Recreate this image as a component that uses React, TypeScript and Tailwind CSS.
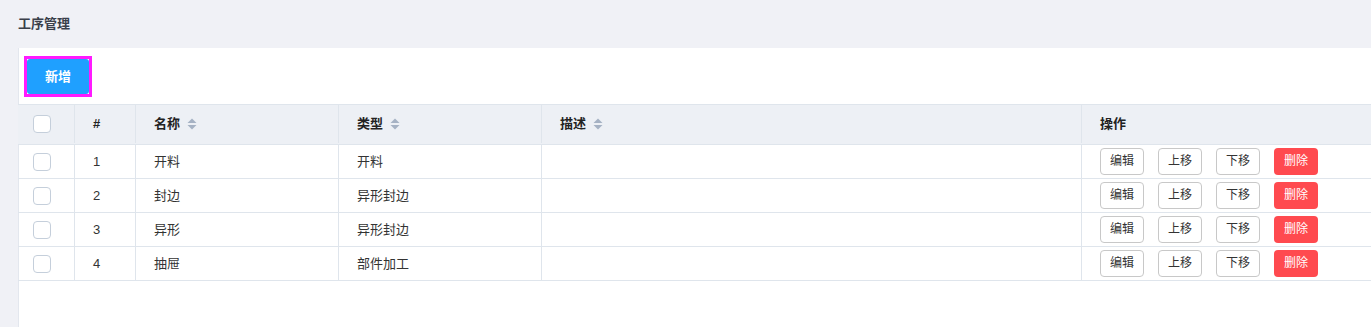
const rows = [
  { id: 1, name: "开料", type: "开料", desc: "" },
  { id: 2, name: "封边", type: "异形封边", desc: "" },
  { id: 3, name: "异形", type: "异形封边", desc: "" },
  { id: 4, name: "抽屉", type: "部件加工", desc: "" },
];

const cols = "grid grid-cols-[57px_61px_203px_203px_540px_1fr]";
const cell = "flex items-center border-r border-[#dfe5ec] pl-[18px]";
const checkCell = "flex items-center border-r border-[#dfe5ec] pl-[15px]";

function SortIcon() {
  return (
    <svg width="10" height="12" viewBox="0 0 10 12" className="ml-[7px]">
      <path d="M5 0.5 L9.5 5 H0.5 Z" fill="#a6b2c4" />
      <path d="M5 11.5 L9.5 7 H0.5 Z" fill="#a6b2c4" />
    </svg>
  );
}

function Checkbox() {
  return <span className="block h-[18px] w-[18px] rounded-[4px] border border-[#c5cfdb] bg-white" />;
}

function ActionButton({ label, danger }: { label: string; danger?: boolean }) {
  return (
    <button
      type="button"
      className={
        danger
          ? "h-[27px] w-[44px] rounded-[4px] bg-[#ff4a4f] text-[12px] text-white"
          : "h-[27px] w-[44px] rounded-[4px] border border-[#c8c8c8] bg-white text-[12px] text-[#333]"
      }
    >
      {label}
    </button>
  );
}

export default function App() {
  return (
    <div
      className="flex h-[327px] w-full flex-col bg-[#f0f1f6] text-[13px] text-[#333]"
      style={{ fontFamily: '"Liberation Sans", "Noto Sans CJK SC", sans-serif' }}
    >
      <div className="flex h-[48px] items-center pb-[1px] pl-[18px] text-[13px] font-semibold text-[#3a3f4a]">
        工序管理
      </div>
      <div className="ml-[18px] flex flex-1 flex-col border-l border-[#e3e7ee] bg-white">
        <div className="pl-[5px] pt-[8px]">
          <div className="inline-block border-[3px] border-[#ff1aff] bg-white">
            <button
              type="button"
              className="flex h-[35px] w-[62px] items-center justify-center rounded-[3px] bg-[#1fa0ff] text-[13px] font-semibold text-white"
            >
              新增
            </button>
          </div>
        </div>
        <div className="mt-[7px] ml-[-1px]">
          <div className={`${cols} h-[41px] border-y border-[#dfe5ec] bg-[#edf0f5] pb-[1px] font-semibold text-[#222]`}>
            <div className={checkCell}>
              <Checkbox />
            </div>
            <div className={cell}>#</div>
            <div className={cell}>
              名称
              <SortIcon />
            </div>
            <div className={cell}>
              类型
              <SortIcon />
            </div>
            <div className={cell}>
              描述
              <SortIcon />
            </div>
            <div className="flex items-center pl-[18px]">操作</div>
          </div>
          {rows.map((row) => (
            <div key={row.id} className={`${cols} h-[34px] border-b border-[#dfe5ec]`}>
              <div className={checkCell}>
                <Checkbox />
              </div>
              <div className={cell}>{row.id}</div>
              <div className={cell}>{row.name}</div>
              <div className={cell}>{row.type}</div>
              <div className={cell}>{row.desc}</div>
              <div className="flex items-center gap-[14px] pb-[1px] pl-[18px]">
                <ActionButton label="编辑" />
                <ActionButton label="上移" />
                <ActionButton label="下移" />
                <ActionButton label="删除" danger />
              </div>
            </div>
          ))}
        </div>
      </div>
    </div>
  );
}
